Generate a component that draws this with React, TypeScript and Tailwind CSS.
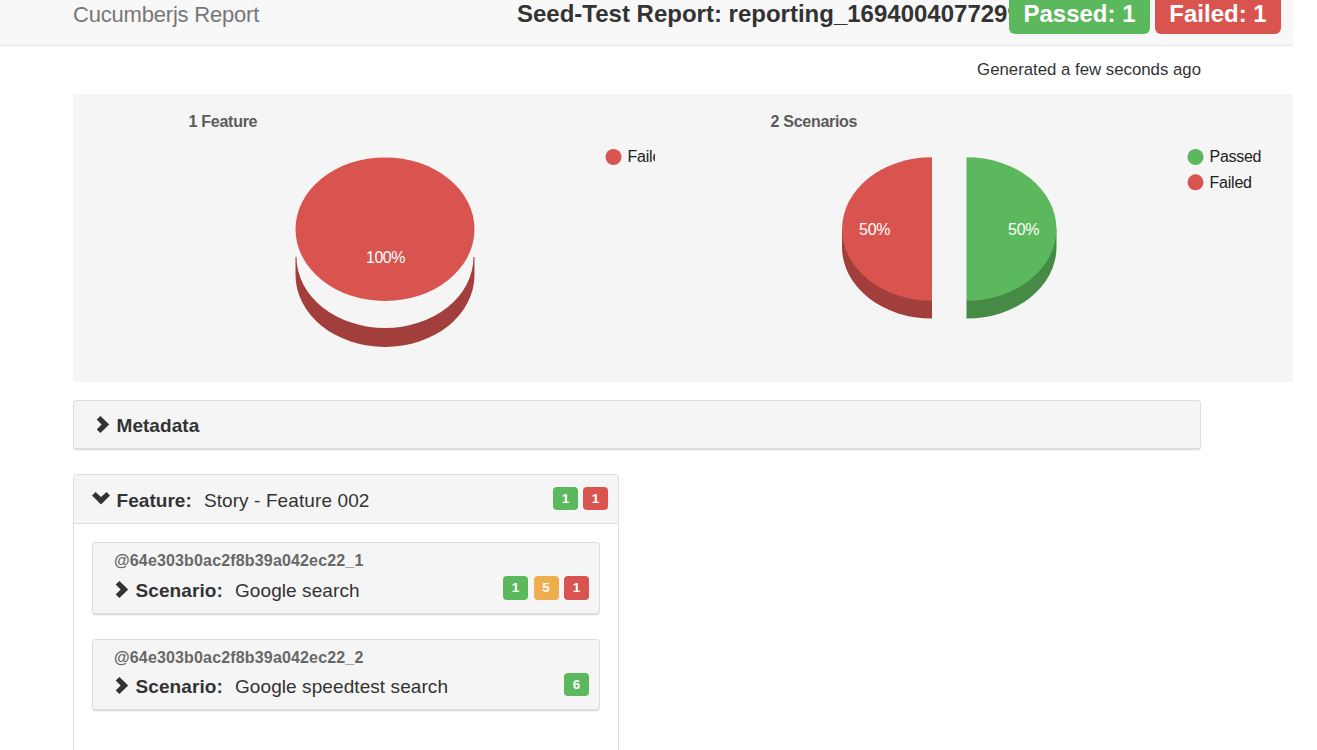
import React from "react";

const GREEN = "bg-[#5cb85c]";
const RED = "bg-[#d9534f]";
const ORANGE = "bg-[#f0ad4e]";

function Badge({ color, children }: { color: string; children: React.ReactNode }) {
  return (
    <span
      className={`flex w-[25px] items-center justify-center rounded-[4px] text-[13.5px] font-bold leading-none text-white ${color}`}
    >
      {children}
    </span>
  );
}

function Chevron({ down = false }: { down?: boolean }) {
  return down ? (
    <svg width="18" height="18" viewBox="0 0 18 18" className="block shrink-0">
      <path d="M0 5.6 3.5 2 9 7.1 14.5 2 18 5.6 9 14.4Z" fill="#333" />
    </svg>
  ) : (
    <svg width="18" height="18" viewBox="0 0 18 18" className="block shrink-0">
      <path d="M4.7 3.5 8.4 0 17.2 8.5 8.4 17 4.7 13.5 9.6 8.5Z" fill="#333" />
    </svg>
  );
}

function FeatureChart() {
  return (
    <svg width="582" height="288" viewBox="73 94 582 288" className="block shrink-0 overflow-hidden" fontSize="16">
      <text x="188.5" y="127" fontWeight="bold" fill="#5b5b5b" textLength="69">1 Feature</text>
      <path d="M295.5 257V275A89.5 72 0 0 0 474.5 275V257H473.5A88.5 71 0 0 1 296.5 257Z" fill="#a23e3b" />
      <ellipse cx="385" cy="229.2" rx="89.5" ry="71.8" fill="#d9534f" />
      <text x="366" y="263" fill="#fff" textLength="39.5">100%</text>
      <circle cx="613.5" cy="157" r="8" fill="#d9534f" />
      <text x="627.5" y="162" fill="#222" textLength="42.5">Failed</text>
    </svg>
  );
}

function ScenarioChart() {
  return (
    <svg width="638" height="288" viewBox="655 94 638 288" className="block shrink-0" fontSize="16">
      <text x="770.5" y="127" fontWeight="bold" fill="#5b5b5b" textLength="87">2 Scenarios</text>
      <path d="M842 229V247A90 71.6 0 0 0 932 318.6V300L842 229Z" fill="#a23e3b" />
      <path d="M932 157.2A90 71.8 0 0 0 932 300.8Z" fill="#d9534f" />
      <path d="M1056.5 229V247A90 71.6 0 0 1 966.5 318.6V300Z" fill="#458a45" />
      <path d="M966.5 157.2A90 71.8 0 0 1 966.5 300.8Z" fill="#5cb85c" />
      <text x="859" y="235" fill="#fff" textLength="31.5">50%</text>
      <text x="1008" y="235" fill="#fff" textLength="31.5">50%</text>
      <circle cx="1195.5" cy="157" r="8" fill="#5cb85c" />
      <text x="1209.5" y="162" fill="#222" textLength="52">Passed</text>
      <circle cx="1195.5" cy="182.3" r="8" fill="#d9534f" />
      <text x="1209.5" y="188" fill="#222" textLength="42.5">Failed</text>
    </svg>
  );
}

function ScenarioCard({
  tag,
  name,
  height,
  titlePad,
  children,
}: {
  tag: string;
  name: string;
  height: string;
  titlePad: string;
  children: React.ReactNode;
}) {
  return (
    <div
      className={`flex w-[508px] flex-col rounded-[4px] border border-b-2 border-[#ddd] bg-[#f5f5f5] pl-[18px] pr-[10px] shadow-[0_1px_1px_rgba(0,0,0,0.05)] ${height}`}
    >
      <div className="h-[33px] pl-[3px] pt-2 text-[16px] font-bold leading-[20px] tracking-[0.16px] text-[#686868]">{tag}</div>
      <div className="flex h-6">
        <div className={`flex grow items-start ${titlePad}`}>
          <Chevron />
          <span className="ml-[6.5px] text-[19px] font-bold leading-[20px] tracking-[0.1px]">Scenario:</span>
          <span className="ml-3 text-[19px] leading-[20px] tracking-[0.08px]">{name}</span>
        </div>
        <div className="flex h-6">{children}</div>
      </div>
    </div>
  );
}

export default function App() {
  return (
    <div className="h-[750px] w-[1317px] overflow-hidden bg-white font-['Liberation_Sans',Arial,sans-serif] text-[#333]">
      <header className="flex h-[46px] w-[1293px] items-start border-b border-[#e7e7e7] bg-[#f8f8f8] pl-[73px]">
        <div className="w-[444px] pt-[2px] text-[22px] leading-[26px] tracking-[-0.2px] text-[#777]">Cucumberjs Report</div>
        <div className="w-[492px] overflow-hidden whitespace-nowrap pt-[1px] text-[24px] font-bold leading-[26px]">
          Seed-Test Report: reporting_1694004077299
        </div>
        <div
          className={`flex h-[34px] w-[141px] justify-center rounded-b-[6px] pt-[1px] text-[24px] font-bold leading-[26px] text-white ${GREEN}`}
        >
          Passed: 1
        </div>
        <div
          className={`ml-[5px] flex h-[34px] w-[126px] justify-center rounded-b-[6px] pt-[1px] text-[24px] font-bold leading-[26px] text-white ${RED}`}
        >
          Failed: 1
        </div>
      </header>

      <div className="ml-[73px] flex h-12 w-[1128px] justify-end pt-[14px] text-[16.8px] leading-[20px]">
        Generated a few seconds ago
      </div>

      <div className="ml-[73px] flex h-[288px] w-[1220px] bg-[#f5f5f5]">
        <FeatureChart />
        <ScenarioChart />
      </div>

      <main className="ml-[73px] flex flex-col items-start pt-[18px]">
        <section className="flex h-[50px] w-[1128px] items-start rounded-[4px] border border-b-2 border-[#ddd] bg-[#f5f5f5] pl-[18px] pt-[15px] shadow-[0_1px_1px_rgba(0,0,0,0.05)]">
          <Chevron />
          <span className="ml-[6.5px] text-[19px] font-bold leading-[20px] tracking-[0.05px]">Metadata</span>
        </section>

        <section className="mt-6 h-[300px] w-[546px] rounded-t-[4px] border border-[#ddd] bg-white">
          <div className="flex h-[49px] rounded-t-[3px] border-b border-[#ddd] bg-[#f5f5f5] pl-[18px] pr-[10px] pt-3">
            <div className="flex grow items-start pt-[3px]">
              <Chevron down />
              <span className="ml-[6.5px] pt-[1px] text-[19px] font-bold leading-[20px] tracking-[0.05px]">Feature:</span>
              <span className="ml-3 pt-[1px] text-[19px] leading-[20px] tracking-[0.1px]">Story - Feature 002</span>
            </div>
            <div className="flex h-[23px] gap-[5px]">
              <Badge color={GREEN}>1</Badge>
              <Badge color={RED}>1</Badge>
            </div>
          </div>
          <div className="flex flex-col gap-6 pl-[18px] pt-[18px]">
            <ScenarioCard tag="@64e303b0ac2f8b39a042ec22_1" name="Google search" height="h-[73px]" titlePad="pt-[5px]">
              <div className="flex gap-[5.5px]">
                <Badge color={GREEN}>1</Badge>
                <Badge color={ORANGE}>5</Badge>
                <Badge color={RED}>1</Badge>
              </div>
            </ScenarioCard>
            <ScenarioCard
              tag="@64e303b0ac2f8b39a042ec22_2"
              name="Google speedtest search"
              height="h-[72px]"
              titlePad="pt-1"
            >
              <div className="flex h-[23px]">
                <Badge color={GREEN}>6</Badge>
              </div>
            </ScenarioCard>
          </div>
        </section>
      </main>
    </div>
  );
}
